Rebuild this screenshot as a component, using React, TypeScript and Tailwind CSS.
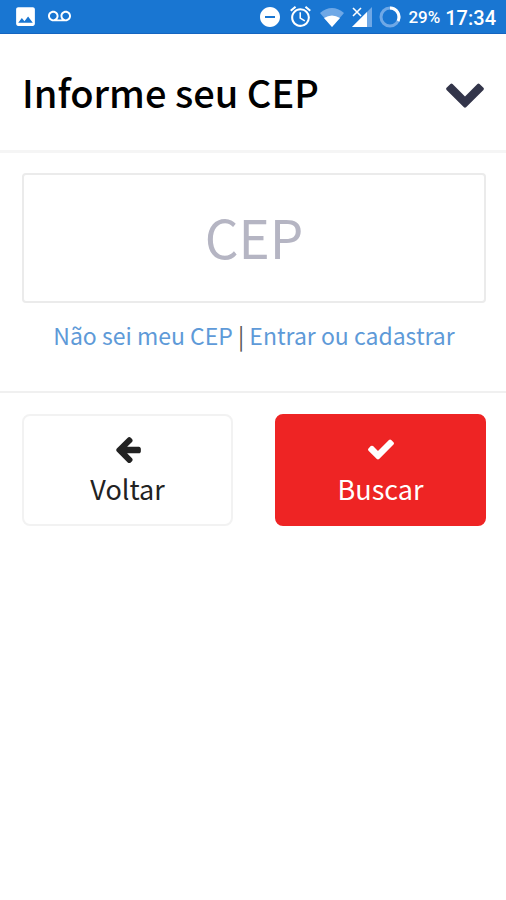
import type { ReactNode } from "react";
import { MdAlarm, MdDoNotDisturbOn, MdImage, MdVoicemail } from "react-icons/md";

function GlyphIcon({ d, className }: { d: string; className: string }) {
  return (
    <svg viewBox="0 0 1792 1792" fill="currentColor" aria-hidden="true" className={className}>
      <path d={d} />
    </svg>
  );
}

const CHEVRON_DOWN =
  "M1683 808l-742 741q-19 19-45 19t-45-19l-742-741q-19-19-19-45.5t19-45.5l166-165q19-19 45-19t45 19l531 531 531-531q19-19 45-19t45 19l166 165q19 19 19 45.5t-19 45.5z";
const ARROW_LEFT =
  "M1664 896v128q0 53-32.5 90.5t-84.5 37.5h-704l293 294q38 36 38 90t-38 90l-75 76q-37 37-90 37-52 0-91-37l-651-652q-37-37-37-90 0-52 37-91l651-650q38-38 91-38 52 0 90 38l75 74q38 38 38 91t-38 91l-293 293h704q52 0 84.5 37.5t32.5 90.5z";
const CHECK =
  "M1671 566q0 40-28 68l-724 724-136 136q-28 28-68 28t-68-28l-136-136-362-362q-28-28-28-68t28-68l136-136q28-28 68-28t68 28l294 295 656-657q28-28 68-28t68 28l136 136q28 28 28 68z";

function WifiIcon() {
  return (
    <svg viewBox="0 0 26 22" aria-hidden="true" className="h-[22px] w-[26px]">
      <path d="M1 7Q13-3 25 7L13 21Z" fill="#6fa8e6" />
      <path d="M5 12Q13 7 21 12L13 21Z" fill="#fff" />
    </svg>
  );
}

function SignalIcon() {
  return (
    <svg viewBox="0 0 22 22" aria-hidden="true" className="size-[22px]">
      <path d="M21 1V21H1Z" fill="#6fa8e6" />
      <path d="M16 6V21H1Z" fill="#fff" />
      <path d="M0 0H11V10H0Z" fill="#1976d2" />
      <path d="M2 2L10 10M10 2L2 10" stroke="#fff" strokeWidth="1.6" />
    </svg>
  );
}

function BatteryIcon() {
  return (
    <svg viewBox="0 0 22 22" fill="none" aria-hidden="true" className="size-[22px]">
      <circle cx="11" cy="11" r="9" stroke="#6fa8e6" strokeWidth="3" />
      <path d="M11 2A9 9 0 0 1 19 15" stroke="#fff" strokeWidth="3" />
    </svg>
  );
}

function StatusBar() {
  return (
    <div className="flex h-[34px] items-center justify-between border-b border-[#1565c0] bg-[#1976d2] pr-[10px] pl-[13px] font-['Roboto',sans-serif] text-white">
      <div className="flex items-center gap-[10px]">
        <MdImage size={25} />
        <MdVoicemail size={23} />
      </div>
      <div className="flex items-center">
        <MdDoNotDisturbOn size={24} className="mr-[6px]" />
        <MdAlarm size={25} className="mr-[6px]" />
        <WifiIcon />
        <span className="mr-[6px] ml-[6px]">
          <SignalIcon />
        </span>
        <BatteryIcon />
        <span className="ml-[7px] pt-[2px] text-[17px] font-medium">29%</span>
        <span className="ml-[5px] pt-[2px] text-[20px] leading-6 font-medium">17:34</span>
      </div>
    </div>
  );
}

function ActionButton({
  icon,
  children,
  className,
}: {
  icon: ReactNode;
  children: ReactNode;
  className: string;
}) {
  return (
    <button
      type="button"
      className={`flex h-28 flex-col items-center rounded-lg border-2 pt-[18px] text-[27px] leading-[50px] ${className}`}
    >
      {icon}
      {children}
    </button>
  );
}

export default function App() {
  return (
    <div className="min-h-screen bg-white font-['Noto_Sans_CJK_JP','Open_Sans',sans-serif] text-black">
      <StatusBar />

      <header className="flex h-[119px] items-center justify-between border-b-3 border-[#f5f5f5] pr-5 pl-[22px]">
        <h1 className="text-[38px] leading-[48px] font-medium">Informe seu CEP</h1>
        <button type="button" aria-label="Fechar" className="text-[#33354a]">
          <GlyphIcon d={CHEVRON_DOWN} className="size-[42px]" />
        </button>
      </header>

      <form>
        <div className="border-b-2 border-[#f0f0f0] pt-5 pr-5 pb-[38px] pl-[22px]">
          <input
            type="text"
            inputMode="numeric"
            aria-label="CEP"
            placeholder="CEP"
            className="h-[130px] w-full rounded border-2 border-[#ebebeb] pb-1 text-center text-[53px] placeholder:text-[#b5b5c3]"
          />
          <p className="mt-[14px] text-center text-[23px] leading-9 text-[#555]">
            <a href="#" className="text-[#5e9ad8]">
              Não sei meu CEP
            </a>
            {" | "}
            <a href="#" className="text-[#5e9ad8]">
              Entrar ou cadastrar
            </a>
          </p>
        </div>

        <div className="grid grid-cols-2 gap-[42px] pt-[21px] pr-5 pl-[22px]">
          <ActionButton
            icon={<GlyphIcon d={ARROW_LEFT} className="size-[30px]" />}
            className="border-[#f2f2f2] bg-white text-[#222]"
          >
            Voltar
          </ActionButton>
          <ActionButton
            icon={<GlyphIcon d={CHECK} className="size-[30px]" />}
            className="border-[#ee2424] bg-[#ee2424] text-white"
          >
            Buscar
          </ActionButton>
        </div>
      </form>
    </div>
  );
}
